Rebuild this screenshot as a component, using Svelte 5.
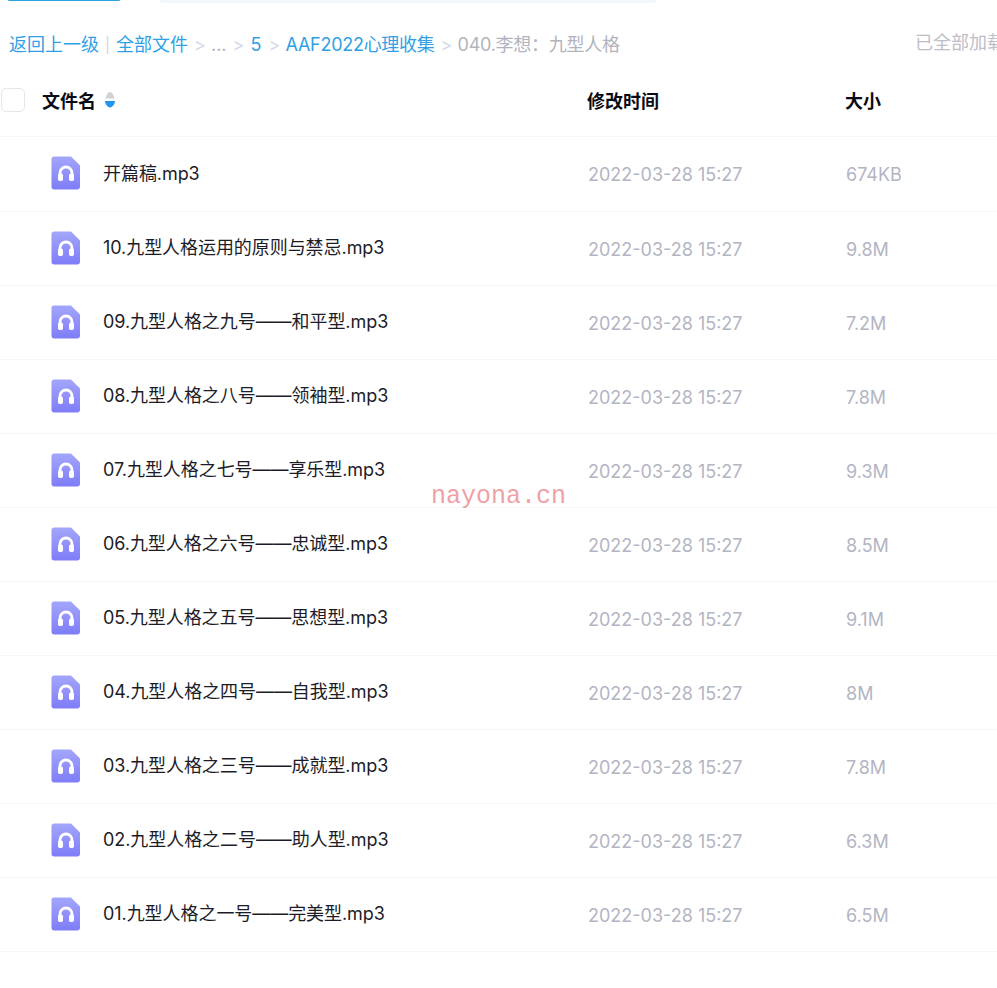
<script>
  const files = [
    ['开篇稿.mp3', '674KB'],
    ['10.九型人格运用的原则与禁忌.mp3', '9.8M'],
    ['09.九型人格之九号——和平型.mp3', '7.2M'],
    ['08.九型人格之八号——领袖型.mp3', '7.8M'],
    ['07.九型人格之七号——享乐型.mp3', '9.3M'],
    ['06.九型人格之六号——忠诚型.mp3', '8.5M'],
    ['05.九型人格之五号——思想型.mp3', '9.1M'],
    ['04.九型人格之四号——自我型.mp3', '8M'],
    ['03.九型人格之三号——成就型.mp3', '7.8M'],
    ['02.九型人格之二号——助人型.mp3', '6.3M'],
    ['01.九型人格之一号——完美型.mp3', '6.5M']
  ];
</script>

<div class="page">
  <div class="top">
    <div class="btn"></div>
    <div class="search"></div>
  </div>

  <div class="crumbs">
    <div class="path">
      <span class="link">返回上一级</span>
      <span class="bar">|</span>
      <span class="link">全部文件</span>
      <span class="sep">&gt;</span>
      <span class="dots">...</span>
      <span class="sep">&gt;</span>
      <span class="link num">5</span>
      <span class="sep">&gt;</span>
      <span class="link tight">AAF2022心理收集</span>
      <span class="sep">&gt;</span>
      <span class="current tight">040.李想：九型人格</span>
    </div>
    <div class="loaded">已全部加载</div>
  </div>

  <div class="head">
    <div class="check"></div>
    <div class="col-name">
      文件名
      <svg class="sort" width="12" height="18" viewBox="0 0 12 18">
        <path d="M6 1 C8 1 10 4 10.5 7.500 L1.500 7.500 C2 4 4 1 6 1Z" fill="#cfd2d8" />
        <path d="M1 10 L11 10 C11 13 8 16.500 6 16.500 C4 16.500 1 13 1 10Z" fill="#1e96f2" />
      </svg>
    </div>
    <div class="col-time">修改时间</div>
    <div class="col-size">大小</div>
  </div>

  <div class="list">
    {#each files as f}
      <div class="row">
        <svg class="icon" width="30" height="34" viewBox="0 0 30 34">
          <defs>
            <linearGradient id="fileGrad" x1="0" y1="0" x2="0" y2="1">
              <stop offset="0" stop-color="#a3a6fb" />
              <stop offset="1" stop-color="#7f7cf8" />
            </linearGradient>
          </defs>
          <path d="M3 0.500 H20 L29 9.500 V30.500 Q29 33.500 26 33.500 H3 Q0.500 33.500 0.500 30.500 V3 Q0.500 0.500 3 0.500Z" fill="url(#fileGrad)" />
          <path d="M9 21 V17 A6 6 0 0 1 21 17 V21" fill="none" stroke="#fff" stroke-width="2.800" />
          <rect x="7" y="17.500" width="5" height="7.500" rx="1.800" fill="#fff" />
          <rect x="18" y="17.500" width="5" height="7.500" rx="1.800" fill="#fff" />
        </svg>
        <div class="name">{f[0]}</div>
        <div class="time">2022-03-28 15:27</div>
        <div class="size">{f[1]}</div>
      </div>
    {/each}
    <div class="mark">nayona.cn</div>
  </div>
</div>

<style>
  :global(body) {
    margin: 0;
    background: #fff;
  }
  .page {
    position: relative;
    width: 997px;
    height: 988px;
    overflow: hidden;
    font-family: Inter, "Noto Sans CJK SC", sans-serif;
  }
  .top {
    display: flex;
    height: 2px;
  }
  .btn {
    width: 112px;
    height: 1px;
    margin-left: 8px;
    background: #2ba4e6;
    border-radius: 0 0 6px 6px;
  }
  .search {
    width: 496px;
    height: 3px;
    margin-left: 40px;
    background: #f0f8fe;
    border-radius: 0 0 8px 8px;
  }
  .crumbs {
    display: flex;
    justify-content: space-between;
    height: 62px;
    padding: 29px 0 0 9px;
    box-sizing: border-box;
    white-space: nowrap;
    font-size: 18px;
    line-height: 28px;
  }
  .path {
    display: flex;
    align-items: center;
    height: 28px;
  }
  .link {
    color: #2f9fe6;
  }
  .num {
    margin: 0 1px;
  }
  .tight {
    letter-spacing: -0.27px;
  }
  .bar {
    margin: 0 6px;
    color: #cfd4de;
    font-size: 15px;
  }
  .sep {
    width: 11px;
    margin: 0 6px;
    text-align: center;
    color: #d3d9ea;
    font-size: 18px;
  }
  .dots {
    color: #a9adb8;
  }
  .current {
    color: #b1b3bd;
  }
  .loaded {
    width: 82px;
    overflow: hidden;
    flex: none;
    color: #bcbec8;
    font-size: 18px;
    margin-top: -2px;
  }
  .head {
    position: relative;
    display: flex;
    align-items: center;
    height: 73px;
    border-bottom: 1px solid #f6f6f8;
    font-size: 18px;
    font-weight: 700;
    color: #0b0b14;
    box-sizing: border-box;
    padding-bottom: 1px;
  }
  .check {
    width: 22px;
    height: 22px;
    margin-left: 1px;
    border: 1px solid #e6e6ea;
    border-radius: 5px;
    flex: none;
  }
  .col-name {
    display: flex;
    align-items: center;
    gap: 8px;
    width: 545px;
    margin-left: 17px;
    flex: none;
  }
  .col-time {
    width: 258px;
    flex: none;
  }
  .sort {
    flex: none;
  }
  .list {
    position: relative;
  }
  .row {
    display: flex;
    align-items: center;
    height: 74px;
    box-sizing: border-box;
    border-bottom: 1px solid #f6f6f8;
  }
  .row:first-child {
    height: 75px;
  }
  .icon {
    flex: none;
    margin-left: 51px;
    margin-top: -2px;
  }
  .name {
    width: 485px;
    margin-left: 22px;
    flex: none;
    font-size: 18px;
    letter-spacing: -0.06px;
    color: #1c1c28;
    white-space: nowrap;
    margin-top: -5px;
  }
  .time {
    width: 258px;
    flex: none;
    font-size: 18px;
    color: #b3b5c3;
    white-space: nowrap;
    margin-top: 1px;
  }
  .size {
    font-size: 18px;
    color: #b3b5c3;
    margin-top: 1px;
  }
  .mark {
    position: absolute;
    left: 431px;
    top: 345px;
    font-family: "Liberation Mono", monospace;
    font-size: 25px;
    line-height: 30px;
    color: #f0a0a6;
  }
</style>
